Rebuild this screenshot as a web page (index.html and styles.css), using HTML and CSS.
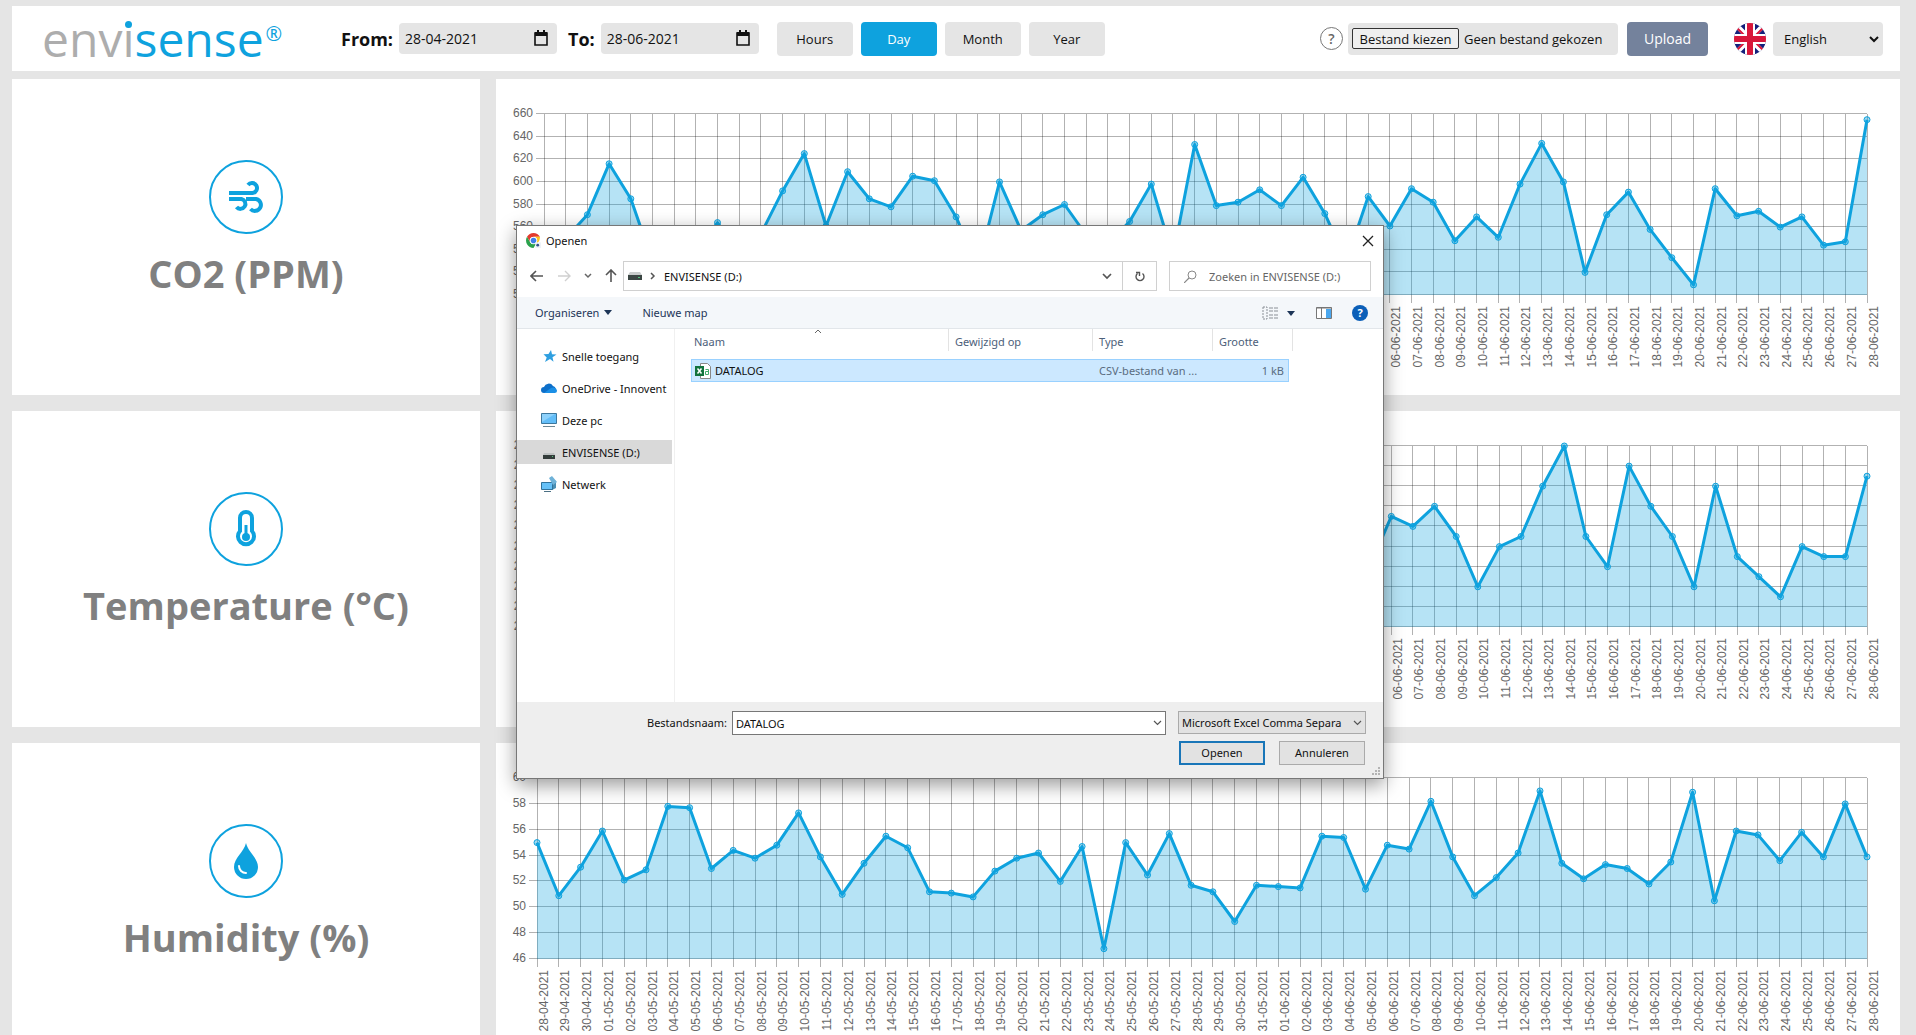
FILE: index.html
```html
<!DOCTYPE html>
<html lang="en">
<head>
<meta charset="utf-8">
<title>envisense</title>
<link rel="stylesheet" href="styles.css">
</head>
<body>
<header class="topbar">
  <a class="logo" href="#"><span class="logo-grey">env<span class="logo-i">i</span></span>sense<sup class="logo-reg">®</sup></a>
  <div class="dates">
    <label class="date-label" for="from">From:</label>
    <span class="date-field">
      <input class="date-input" id="from" type="text" value="28-04-2021">
      <svg class="calendar" viewBox="0 0 14 16"><path d="M1 3h12v12H1z" fill="none" stroke="#111" stroke-width="1.6"/><path d="M1 2h12v4H1zM3 0h2v3H3zM9 0h2v3H9z" fill="#111"/></svg>
    </span>
    <label class="date-label" for="to">To:</label>
    <span class="date-field">
      <input class="date-input" id="to" type="text" value="28-06-2021">
      <svg class="calendar" viewBox="0 0 14 16"><path d="M1 3h12v12H1z" fill="none" stroke="#111" stroke-width="1.6"/><path d="M1 2h12v4H1zM3 0h2v3H3zM9 0h2v3H9z" fill="#111"/></svg>
    </span>
  </div>
  <nav class="periods">
    <button class="period" type="button">Hours</button>
    <button class="period period-active" type="button">Day</button>
    <button class="period" type="button">Month</button>
    <button class="period" type="button">Year</button>
  </nav>
  <div class="tools">
    <button class="hint" type="button" aria-label="Help">?</button>
    <div class="file-field">
      <input id="file" type="file" hidden>
      <button class="file-button" type="button">Bestand kiezen</button>
      <span>Geen bestand gekozen</span>
    </div>
    <button class="upload" type="button">Upload</button>
    <svg class="flag" viewBox="0 0 32 32">
      <clipPath id="round"><circle cx="16" cy="16" r="16"/></clipPath>
      <g clip-path="url(#round)">
        <path fill="#14207c" d="M0 0h32v32H0z"/>
        <path stroke="#fff" stroke-width="5" d="M0 0l32 32M32 0L0 32"/>
        <path stroke="#d8173a" stroke-width="2" d="M0 2l14 14M32 2L18 16M0 30l14-14M32 30L18 16"/>
        <path fill="#fff" d="M11 0h10v32H11zM0 11h32v10H0z"/>
        <path fill="#d8173a" d="M13 0h6v32h-6zM0 13h32v6H0z"/>
      </g>
    </svg>
    <span class="language">
      <select class="language-select" aria-label="Language"><option>English</option></select>
      <svg class="language-arrow" viewBox="0 0 10 7"><path d="M1 1l4 4 4-4" fill="none" stroke="#111" stroke-width="2"/></svg>
    </span>
  </div>
</header>

<main class="board">
  <section class="card metric">
    <svg class="metric-icon" viewBox="0 0 74 74" fill="none" stroke="#0ea2de">
      <circle cx="37" cy="37" r="36" stroke-width="2"/>
      <g stroke-width="4">
        <path d="M20 33h23.500a5 5 0 1 0-4.500-8"/>
        <path d="M20 39h12.500a5 5 0 1 1-5 8"/>
        <path d="M37 39h10a6 6 0 1 1-5.500 10"/>
      </g>
    </svg>
    <h2 class="metric-title">CO2 (PPM)</h2>
  </section>
  <section class="card chart" data-chart="co2"></section>

  <section class="card metric">
    <svg class="metric-icon" viewBox="0 0 74 74" fill="none" stroke="#0ea2de">
      <circle cx="37" cy="37" r="36" stroke-width="2"/>
      <path d="M31 26a6 6 0 0 1 12 0v13a8 8 0 1 1-12 0z" stroke-width="4"/>
      <path d="M37 33v12" stroke-width="3"/>
      <circle cx="37" cy="45" r="4" fill="#0ea2de" stroke="none"/>
    </svg>
    <h2 class="metric-title">Temperature (°C)</h2>
  </section>
  <section class="card chart" data-chart="temperature"></section>

  <section class="card metric">
    <svg class="metric-icon" viewBox="0 0 74 74" fill="none">
      <circle cx="37" cy="37" r="36" stroke="#0ea2de" stroke-width="2"/>
      <path d="M37 19C35 28 25 34 25 43a12 12 0 0 0 24 0C49 34 39 28 37 19z" fill="#0ea2de"/>
      <path d="M30 42a7 7 0 0 0 7 7" stroke="#fff" stroke-width="2" stroke-linecap="round"/>
    </svg>
    <h2 class="metric-title">Humidity (%)</h2>
  </section>
  <section class="card chart" data-chart="humidity"></section>
</main>

<div class="dialog" role="dialog" aria-label="Openen">
  <div class="title-row">
    <svg class="chrome" viewBox="0 0 16 16">
      <circle cx="8" cy="8" r="8" fill="#fff"/>
      <path fill="#e33b2e" d="M1.100 4A8 8 0 0 1 14.900 4H8a4 4 0 0 0-3.500 6z"/>
      <path fill="#2ba24c" d="M1.100 4A8 8 0 0 0 8 16l3.500-6A4 4 0 0 1 4.500 10z"/>
      <path fill="#fcc31e" d="M14.900 4H8a4 4 0 0 1 3.500 6l-1 2a9 9 0 0 0 4.400-8z"/>
      <circle cx="8" cy="8" r="3.700" fill="#fff"/><circle cx="8" cy="8" r="3" fill="#3f7fe8"/>
      <path fill="#eef2f8" d="M10 10h6v6h-6z"/><circle cx="12.500" cy="13" r="1.500" fill="#34518a"/>
    </svg>
    <span class="title">Openen</span>
    <button class="icon-button close" type="button" aria-label="Sluiten"><svg width="12" height="12" viewBox="0 0 12 12"><path d="M1 1l10 10M11 1L1 11" stroke="#222" stroke-width="1.300"/></svg></button>
  </div>

  <div class="nav-row">
    <div class="arrows">
      <button class="icon-button" type="button" aria-label="Terug"><svg width="14" height="12" viewBox="0 0 14 12"><path d="M6 1L1 6l5 5M1 6h12" fill="none" stroke="#555" stroke-width="1.600"/></svg></button>
      <button class="icon-button" type="button" aria-label="Vooruit"><svg width="14" height="12" viewBox="0 0 14 12"><path d="M8 1l5 5-5 5M13 6H1" fill="none" stroke="#d0d0d0" stroke-width="1.400"/></svg></button>
      <button class="icon-button" type="button" aria-label="Recente locaties"><svg width="8" height="6" viewBox="0 0 8 6"><path d="M1 1l3 3 3-3" fill="none" stroke="#666" stroke-width="1.500"/></svg></button>
      <button class="icon-button" type="button" aria-label="Omhoog"><svg width="12" height="14" viewBox="0 0 12 14"><path d="M1 6l5-5 5 5M6 1v12" fill="none" stroke="#555" stroke-width="1.600"/></svg></button>
    </div>
    <div class="address">
      <svg width="14" height="8" viewBox="0 0 14 8"><path fill="#c9cccc" d="M2 0h10l2 3H0z"/><path fill="#3c4744" d="M0 3h14v5H0z"/><path fill="#54c47c" d="M10 5h2v1h-2z"/></svg>
      <svg width="6" height="8" viewBox="0 0 6 8"><path d="M1 1l3 3-3 3" fill="none" stroke="#555" stroke-width="1.500"/></svg>
      <span class="address-text">ENVISENSE (D:)</span>
      <button class="icon-button" type="button" aria-label="Vorige locaties"><svg width="10" height="7" viewBox="0 0 10 7"><path d="M1 1l4 4 4-4" fill="none" stroke="#555" stroke-width="1.700"/></svg></button>
      <button class="icon-button refresh" type="button" aria-label="Vernieuwen"><svg width="12" height="12" viewBox="0 0 12 12"><path d="M3.500 3.500a4 4 0 1 0 5 0M2 2.500h3.500V6" fill="none" stroke="#555" stroke-width="1.400"/></svg></button>
    </div>
    <label class="search">
      <svg width="13" height="13" viewBox="0 0 13 13"><circle cx="8" cy="5" r="4" fill="none" stroke="#888"/><path d="M5 8l-5 5" stroke="#888" stroke-width="1.200"/></svg>
      <input class="search-input" type="text" aria-label="Zoeken" placeholder="Zoeken in ENVISENSE (D:)">
    </label>
  </div>

  <div class="command-row">
    <button class="command" type="button">Organiseren <svg width="8" height="5" viewBox="0 0 8 5"><path d="M0 0h8L4 5z" fill="#1d3557"/></svg></button>
    <button class="command" type="button">Nieuwe map</button>
    <div class="view-tools">
      <button class="icon-button" type="button" aria-label="Weergave"><svg width="34" height="14" viewBox="0 0 34 14"><path d="M1 1h4v12H1z" fill="none" stroke="#8a8f96" stroke-dasharray="2 1"/><path d="M7 2h4M12 2h4M7 5h4M12 5h4M7 9h4M12 9h4M7 12h4M12 12h4" stroke="#8a8f96"/><path d="M25 5h8l-4 5z" fill="#1d3557"/></svg></button>
      <button class="icon-button" type="button" aria-label="Voorbeeldvenster"><svg width="16" height="12" viewBox="0 0 16 12"><path d="M.5.5h15v11H.500z" fill="#fff" stroke="#777"/><path d="M.5 1h15M5.500 1v11" stroke="#777"/><path fill="#4ba7ee" d="M10 2h5v9h-5z"/></svg></button>
      <button class="icon-button help" type="button" aria-label="Hulp">?</button>
    </div>
  </div>

  <div class="browser">
    <ul class="places">
      <li><a class="place" href="#"><svg viewBox="0 0 16 16"><path fill="#2f9fe0" d="M10 2l1 4.200 4.500.3-4 2.700 1 4.600L9 11 4 14l1.700-4.600L2.500 6.300l5-.3z"/></svg>Snelle toegang</a></li>
      <li><a class="place" href="#"><svg viewBox="0 0 16 16"><path fill="#0d6fc9" d="M3 13a3 3 0 0 1 0-6 5 5 0 0 1 9-1 4 4 0 0 1 1.500 7z"/><path fill="#1b8fe6" d="M3 13l7-5a4 4 0 0 1 6 2.500A2.500 2.500 0 0 1 13.500 13z"/></svg>OneDrive - Innovent</a></li>
      <li><a class="place" href="#"><svg viewBox="0 0 16 16"><path fill="#62bdf8" stroke="#3d789e" d="M.500 1.500h15v10H.500z"/><path fill="#8dd1fb" d="M1 2h13L1 10z"/><path stroke="#6d8794" d="M2 14.500h12"/></svg>Deze pc</a></li>
      <li><a class="place place-active" href="#"><svg viewBox="0 0 16 16"><path fill="#bfc3c3" d="M3 9h10l1 2H2z"/><path fill="#343d3b" d="M2 11h12v4H2z"/><path fill="#54c47c" d="M11 12h1v1h-1z"/></svg>ENVISENSE (D:)</a></li>
      <li><a class="place" href="#"><svg viewBox="0 0 16 16"><path fill="#4b8fb3" d="M9 1l6 4v7l-4 2V5z"/><path fill="#66c1f7" stroke="#31739b" d="M.500 6.500h11v7H.500z"/><path fill="#6fb2d8" d="M8 2l3-2 5 6-4 3z"/><path stroke="#4c7084" d="M3 15.500h7"/></svg>Netwerk</a></li>
    </ul>
    <table class="files">
      <colgroup><col><col class="col-date"><col class="col-type"><col class="col-size"><col class="col-end"></colgroup>
      <thead>
        <tr><th><svg class="sort" viewBox="0 0 8 5"><path d="M1 4l3-3 3 3" fill="none" stroke="#666"/></svg>Naam</th><th>Gewijzigd op</th><th>Type</th><th colspan="2">Grootte</th></tr>
      </thead>
      <tbody>
        <tr>
          <td class="file-name"><svg class="file-icon" viewBox="0 0 16 16"><path fill="#fff" stroke="#888" d="M5.500.5h7l3 3v12h-10z"/><path fill="#12733d" d="M0 3h9v10H0z"/><path stroke="#fff" stroke-width="1.500" d="M2.500 5.500l4 5M6.500 5.500l-4 5"/><path fill="none" stroke="#43ad6c" d="M10.500 6.500h3v5h-3v-3h3"/></svg>DATALOG</td>
          <td></td><td>CSV-bestand van ...</td><td class="file-size">1 kB</td><td class="end"></td>
        </tr>
      </tbody>
    </table>
  </div>

  <div class="dialog-footer">
    <label class="name-label" for="name">Bestandsnaam:</label>
    <span class="combo">
      <input class="name-input" id="name" type="text" value="DATALOG">
      <svg class="combo-arrow" viewBox="0 0 9 6"><path d="M1 1l3.500 3.500L8 1" fill="none" stroke="#555" stroke-width="1.200"/></svg>
    </span>
    <div class="actions">
      <span class="combo">
        <select class="type-select" aria-label="Bestandstype"><option>Microsoft Excel Comma Separa</option></select>
        <svg class="combo-arrow" viewBox="0 0 9 6"><path d="M1 1l3.500 3.500L8 1" fill="none" stroke="#555" stroke-width="1.200"/></svg>
      </span>
      <div class="buttons">
        <button class="dialog-button dialog-default" type="button">Openen</button>
        <button class="dialog-button" type="button">Annuleren</button>
      </div>
    </div>
    <svg class="grip" viewBox="0 0 9 9"><path fill="#b4b4b4" d="M7 0h2v2H7zM7 3h2v2H7zM4 3h2v2H4zM7 6h2v2H7zM4 6h2v2H4zM1 6h2v2H1z"/></svg>
  </div>
</div>
<script src="script.js"></script>
</body>
</html>
```
FILE: styles.css
```css
* { box-sizing: border-box; }

body {
  margin: 0;
  height: 100vh;
  overflow: hidden;
  padding: 6px 16px 0 12px;
  background: #e5e5e5;
  color: #111;
  font-family: "Open Sans", "Noto Sans", sans-serif;
  font-size: 14px;
}

button, input, select { font: inherit; color: inherit; margin: 0; }

/* top bar */
.topbar {
  display: flex;
  align-items: center;
  height: 65px;
  padding: 0 17px 0 30px;
  margin-bottom: 8px;
  background: #fff;
}
.logo {
  flex: 0 0 299px;
  color: #0ea2de;
  font-size: 48px;
  font-weight: 400;
  line-height: 64px;
  text-decoration: none;
  white-space: nowrap;
}
.logo-grey { color: #adadad; }
.logo-i { position: relative; }
.logo-i::after {
  content: "";
  position: absolute;
  left: 3px;
  top: 15px;
  width: 7px;
  height: 7px;
  border-radius: 50%;
  background: #0ea2de;
}
.logo-reg { margin-left: 2px; font-size: 20px; line-height: 20px; vertical-align: 16px; }
.dates { display: flex; align-items: center; gap: 6px; }
.date-label { font-size: 18px; font-weight: 700; }
.date-field { position: relative; margin-right: 5px; }
.date-input {
  display: block;
  width: 158px;
  height: 31px;
  padding: 0 6px;
  border: 0;
  border-radius: 4px;
  background: #e5e5e5;
}
.calendar { position: absolute; right: 9px; top: 7px; width: 14px; height: 16px; }
.periods { display: flex; gap: 8px; margin-left: 13px; font-size: 13px; }
.period {
  width: 76px;
  height: 34px;
  padding: 0;
  border: 0;
  border-radius: 4px;
  background: #e5e5e5;
}
.period-active { background: #0ea2de; color: #fff; }
.tools { display: flex; align-items: center; margin-left: auto; }
.hint {
  width: 23px;
  height: 23px;
  padding: 0;
  border: 1px solid #777;
  border-radius: 50%;
  background: #fff;
  color: #666;
  font-weight: 600;
  line-height: 20px;
}
.file-field {
  display: flex;
  align-items: center;
  gap: 5px;
  width: 270px;
  height: 32px;
  margin-left: 5px;
  padding: 0 4px;
  border-radius: 4px;
  background: #e5e5e5;
  font-size: 13px;
  white-space: nowrap;
}
.file-button {
  height: 21px;
  width: 107px;
  padding: 0;
  border: 1px solid #333;
  border-radius: 2px;
  background: #efefef;
  line-height: 18px;
}
.upload {
  width: 81px;
  height: 34px;
  margin-left: 9px;
  padding: 0;
  border: 0;
  border-radius: 4px;
  background: #74829c;
  color: #fff;
}
.flag { width: 32px; height: 32px; margin: 0 7px 0 26px; }
.language { position: relative; font-size: 13px; }
.language-select {
  display: block;
  appearance: none;
  width: 110px;
  height: 34px;
  padding: 0 11px;
  border: 0;
  border-radius: 4px;
  background: #e5e5e5;
}
.language-arrow { position: absolute; right: 4px; top: 14px; width: 10px; height: 7px; }

/* dashboard */
.board {
  display: grid;
  grid-template-columns: 1fr 3fr;
  grid-auto-rows: 316px;
  gap: 16px;
}
.card { min-width: 0; background: #fff; }
.metric { display: flex; flex-direction: column; align-items: center; padding-top: 81px; }
.metric-icon { width: 74px; height: 74px; }
.metric-title { margin: 13px 0 0; color: #808080; font-size: 38px; line-height: 52px; font-weight: 700; }
.chart svg { display: block; width: 100%; height: 316px; }
.chart text { fill: #666; font: 12px "Liberation Sans", Arial, sans-serif; }
.grid-line { stroke: rgba(0, 0, 0, .3); }
.area { fill: rgba(14, 162, 222, .3); }
.line { fill: none; stroke: #0ea2de; stroke-width: 3; stroke-linejoin: round; }
.dot { fill: rgba(14, 162, 222, .4); stroke: #0ea2de; }

/* file dialog */
.dialog {
  position: absolute;
  left: 516px;
  top: 225px;
  display: flex;
  flex-direction: column;
  width: 868px;
  height: 554px;
  border: 1px solid #777;
  background: #fff;
  box-shadow: 0 6px 18px rgba(0, 0, 0, .4);
  color: #111;
  font-family: "Noto Sans", "Open Sans", sans-serif;
  font-size: 11px;
}
.icon-button { display: flex; align-items: center; justify-content: center; padding: 0; border: 0; background: none; }
.title-row { display: flex; align-items: center; gap: 5px; height: 29px; padding: 0 9px; }
.chrome { width: 15px; height: 15px; }
.close { margin-left: auto; }
.nav-row { display: flex; align-items: center; height: 42px; padding: 0 12px 0 13px; }
.arrows { display: flex; align-items: center; gap: 13px; width: 93px; }
.address { display: flex; align-items: center; gap: 8px; flex: 1; height: 30px; padding-left: 4px; border: 1px solid #d0d0d0; }
.address-text { flex: 1; }
.refresh { width: 34px; height: 28px; margin-left: 2px; border-left: 1px solid #d0d0d0; }
.search { display: flex; align-items: center; gap: 12px; width: 202px; height: 30px; margin-left: 12px; padding-left: 14px; border: 1px solid #d0d0d0; }
.search-input { flex: 1; min-width: 0; padding: 0; border: 0; background: none; outline: 0; }
.search-input::placeholder { color: #666; opacity: 1; }
.command-row {
  display: flex;
  align-items: center;
  gap: 30px;
  height: 32px;
  padding: 0 15px 0 18px;
  border-bottom: 1px solid #e2e6ea;
  background: #f4f7fa;
}
.command { display: flex; align-items: center; gap: 5px; padding: 0; border: 0; background: none; color: #1d3557; }
.view-tools { display: flex; align-items: center; gap: 20px; margin-left: auto; }
.help { width: 16px; height: 16px; border-radius: 50%; background: #0b5fb8; color: #fff; font-weight: 700; }
.browser { display: flex; flex: 1; }
.places {
  display: flex;
  flex-direction: column;
  gap: 8px;
  width: 158px;
  margin: 0;
  padding: 15px 2px 0 0;
  border-right: 1px solid #f0f0f0;
  list-style: none;
}
.place { display: flex; align-items: center; gap: 5px; height: 24px; padding-left: 24px; color: inherit; text-decoration: none; white-space: nowrap; }
.place svg { flex: none; width: 16px; height: 16px; }
.place-active { background: #d9d9d9; }
.files { width: 602px; margin-left: 16px; border-collapse: separate; border-spacing: 0; table-layout: fixed; align-self: flex-start; }
.col-date { width: 144px; }
.col-type { width: 120px; }
.col-size { width: 76px; }
.col-end { width: 4px; }
.files th {
  position: relative;
  height: 22px;
  padding: 3px 6px 0 3px;
  border-right: 1px solid #e3e3e3;
  color: #4c607a;
  font-weight: 400;
  line-height: 18px;
  text-align: left;
}
.files th + th { padding-left: 6px; }
.sort { position: absolute; left: 123px; top: 0; width: 8px; height: 5px; }
.files tbody::before { content: ""; display: table-row; height: 8px; }
.files td { height: 23px; padding: 0 6px; border: solid #99d1ff; border-width: 1px 0; background: #cce8ff; color: #5a6c80; line-height: 18px; white-space: nowrap; }
.files .file-name { display: flex; align-items: center; gap: 4px; padding: 0 3px; border-left-width: 1px; color: #111; }
.files .file-size { padding-right: 4px; border-right-width: 1px; text-align: right; }
.files .end { padding: 0; border: 0; background: none; }
.file-icon { width: 16px; height: 16px; }
.dialog-footer { position: relative; display: flex; align-items: flex-start; gap: 6px; height: 76px; padding: 9px 17px 0 130px; background: #eee; }
.name-label { width: 79px; line-height: 24px; white-space: nowrap; }
.combo { position: relative; flex: 1; }
.name-input { display: block; width: 100%; height: 24px; padding: 0 3px; border: 1px solid #777; background: #fff; }
.combo-arrow { position: absolute; right: 4px; top: 9px; width: 9px; height: 6px; }
.actions { display: flex; flex-direction: column; gap: 7px; width: 188px; margin-left: 6px; }
.type-select { display: block; appearance: none; width: 100%; height: 23px; padding: 0 3px; border: 1px solid #aaa; border-radius: 0; background: #e2e2e2; }
.buttons { display: flex; justify-content: space-between; padding: 0 1px; }
.dialog-button { width: 86px; height: 24px; padding: 0; border: 1px solid #aaa; background: #e2e2e2; line-height: 18px; }
.dialog-default { border: 2px solid #1976b8; }
.grip { position: absolute; right: 3px; bottom: 2px; width: 9px; height: 9px; }
```
FILE: script.js
```js
const charts = {
  co2: {
    min: 500, max: 660, step: 20, digits: 0, left: 48,
    values: [540, 550, 571, 616, 585, 530, 545, 537, 564, 537, 554, 592, 625, 561, 609, 585, 578, 605, 601, 569,
      524, 600, 557, 571, 580, 553, 545, 565, 598, 534, 633, 579, 582, 593, 579, 604, 572, 530, 587, 561,
      594, 582, 548, 569, 551, 598, 634, 600, 520, 571, 591, 558, 533, 509, 594, 570, 574, 560, 569, 544, 547, 655]
  },
  temperature: {
    min: 22, max: 23.8, step: 0.2, digits: 1, left: 52,
    values: [22.9, 22.7, 22.8, 23, 23.1, 22.9, 22.8, 22.6, 22.7, 22.9, 23.2, 23, 22.9, 22.7, 22.8, 22.9, 23, 23.1, 22.8, 22.7,
      22.6, 22.8, 22.9, 23.1, 23, 22.8, 22.7, 22.9, 23, 22.8, 22.7, 22.6, 22.8, 22.9, 23, 22.9, 22.8, 22.7, 22.6, 23.1,
      23, 23.2, 22.9, 22.4, 22.8, 22.9, 23.4, 23.8, 22.9, 22.6, 23.6, 23.2, 22.9, 22.4, 23.4, 22.7, 22.5, 22.3, 22.8, 22.7, 22.7, 23.5]
  },
  humidity: {
    min: 46, max: 60, step: 2, digits: 0, left: 41,
    values: [55, 50.9, 53.1, 55.9, 52.1, 52.9, 57.8, 57.7, 53, 54.4, 53.8, 54.8, 57.3, 53.9, 51, 53.4, 55.5, 54.6, 51.2, 51.1,
      50.8, 52.8, 53.8, 54.2, 52, 54.7, 46.8, 55, 52.5, 55.7, 51.7, 51.2, 48.9, 51.7, 51.6, 51.5, 55.5, 55.4, 51.4, 54.8,
      54.5, 58.2, 53.9, 50.9, 52.3, 54.2, 59, 53.4, 52.2, 53.3, 53, 51.8, 53.5, 58.9, 50.5, 55.9, 55.6, 53.6, 55.8, 53.9, 58, 53.9]
  }
};

const plotTop = 35;
const plotHeight = 181;
const rightMargin = 33;

function dateLabel(index) {
  const d = new Date(Date.UTC(2021, 3, 28 + index));
  const two = n => String(n).padStart(2, "0");
  return two(d.getUTCDate()) + "-" + two(d.getUTCMonth() + 1) + "-" + d.getUTCFullYear();
}

function draw(card) {
  const c = charts[card.dataset.chart];
  const right = card.clientWidth - rightMargin;
  const bottom = plotTop + plotHeight;
  const last = c.values.length - 1;
  const x = i => c.left + (right - c.left) * i / last;
  const y = v => plotTop + plotHeight * (c.max - v) / (c.max - c.min);
  const crisp = n => Math.floor(n) + 0.5;
  const line = (x1, y1, x2, y2) => `<line class="grid-line" x1="${x1}" y1="${y1}" x2="${x2}" y2="${y2}"/>`;
  let out = "";

  const rows = Math.round((c.max - c.min) / c.step);
  for (let r = 0; r <= rows; r++) {
    const v = c.max - r * c.step;
    const yy = crisp(y(v) - 0.5);
    out += line(c.left - 8, yy, right, yy);
    out += `<text x="${c.left - 11}" y="${Math.round(y(v)) + 3}" text-anchor="end">${v.toFixed(c.digits)}</text>`;
  }
  c.values.forEach((v, i) => {
    const xx = crisp(x(i));
    out += line(xx, plotTop, xx, bottom + 8);
    out += `<text transform="translate(${xx + 10} ${bottom + 11}) rotate(-90)" text-anchor="end">${dateLabel(i)}</text>`;
  });

  const points = c.values.map((v, i) => x(i).toFixed(1) + "," + y(v).toFixed(1));
  out += `<polygon class="area" points="${c.left},${bottom} ${points.join(" ")} ${right},${bottom}"/>`;
  out += `<polyline class="line" points="${points.join(" ")}"/>`;
  c.values.forEach((v, i) => {
    out += `<circle class="dot" cx="${x(i).toFixed(1)}" cy="${y(v).toFixed(1)}" r="3"/>`;
  });
  card.innerHTML = `<svg role="img" aria-label="${card.dataset.chart}">${out}</svg>`;
}

function drawAll() {
  document.querySelectorAll(".chart").forEach(draw);
}

drawAll();
window.addEventListener("resize", drawAll);
```
